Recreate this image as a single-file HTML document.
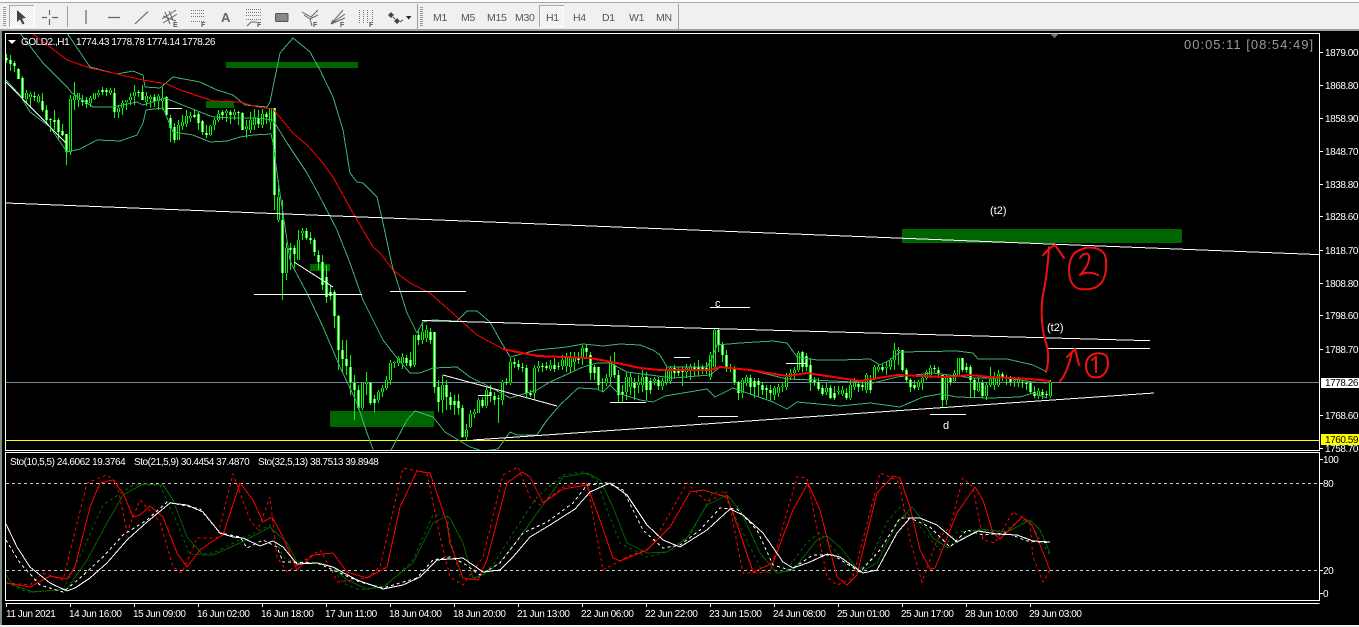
<!DOCTYPE html>
<html><head><meta charset="utf-8"><title>GOLD2.,H1</title>
<style>
html,body{margin:0;padding:0;background:#000;width:1359px;height:627px;overflow:hidden}
svg{display:block}
text{font-family:"Liberation Sans",sans-serif;font-size:10px;letter-spacing:-.45px;fill:#fff}
.tb{fill:#555;letter-spacing:-.3px;font-size:10.5px}
.lb{font-size:11px;letter-spacing:0}
.l{stroke:#fff;stroke-width:1;fill:none;shape-rendering:crispEdges}
.bb{stroke:#3cb371;stroke-width:1;fill:none;shape-rendering:crispEdges}
.hand{stroke:#f01010;stroke-width:2;fill:none;stroke-linecap:round;stroke-linejoin:round}
.i{stroke:#666;fill:none;stroke-width:1.2}
</style></head><body>
<svg width="1359" height="627" viewBox="0 0 1359 627" xmlns="http://www.w3.org/2000/svg">
<defs>
<clipPath id="m"><rect x="6" y="34" width="1313" height="416"/></clipPath>
<clipPath id="s"><rect x="6" y="453" width="1313" height="147"/></clipPath>
<pattern id="hat" width="2" height="2" patternUnits="userSpaceOnUse"><rect width="2" height="2" fill="#fff"/><rect width="1" height="1" fill="#e8e8e8"/><rect x="1" y="1" width="1" height="1" fill="#e8e8e8"/></pattern>
<path id="D" d="M6 58V60M10 60V64M14 63V66M18 69V79M22 78V98M34 96V97M42 101V110M46 110V120M50 119V120M54 120V122M58 120V132M62 131V135M66 134V152M82 100V102M86 100V104M102 90V92M106 90V92M114 93V112M138 92V93M142 92V100M154 97V101M166 97V115M170 118V128M174 127V140M194 115V117M198 114V123M202 121V132M206 133V135M222 112V115M230 112V115M238 112V113M242 113V130M258 118V124M266 114V117M274 108V195M282 220V273M290 248V250M294 248V254M306 231V238M310 238V240M314 240V252M318 255V262M322 262V285M326 277V297M330 292V296M334 292V316M338 316V350M342 350V359M346 359V366M350 367V382M354 383V390M358 390V408M370 383V403M374 399V403M406 358V363M410 360V366M418 335V340M430 332V340M434 332V387M438 387V402M446 385V397M450 397V405M454 401V405M458 401V408M462 408V437M482 400V406M490 392V396M494 396V400M498 398V399M506 382V383M514 362V364M518 364V367M522 367V368M526 368V393M530 393V395M542 366V367M546 366V368M554 365V369M558 366V367M578 358V360M586 348V352M590 355V373M594 367V373M598 367V385M602 382V383M614 365V375M618 375V395M622 392V395M634 383V388M646 377V390M650 381V390M658 380V386M674 368V373M678 370V373M682 370V372M694 367V370M698 367V370M702 367V370M706 368V370M718 330V345M722 344V355M726 355V367M730 367V368M734 368V382M738 382V393M750 378V387M754 381V387M758 381V385M762 385V390M766 388V390M770 390V393M802 352V367M806 356V367M810 365V382M814 380V382M818 382V389M822 388V394M830 388V398M834 393V398M846 393V398M858 384V387M862 385V387M870 380V390M882 367V370M902 350V370M906 370V380M910 380V387M914 385V388M934 368V369M938 370V373M942 375V400M950 378V382M962 358V370M966 367V370M970 367V380M974 380V390M982 383V396M1002 374V378M1006 378V379M1010 379V382M1022 382V383M1026 383V384M1030 383V392M1034 392V396M1042 392V395M1046 394V395"/>
<path id="U" d="M26 93V99M30 94V97M38 96V102M70 99V152M74 96V100M78 93V100M90 98V103M94 93V99M98 93V95M110 90V93M118 108V112M122 103V108M126 100V102M130 97V100M134 92V96M146 96V102M150 97V99M158 96V101M162 98V101M178 125V140M182 122V126M186 116V124M190 116V118M210 126V135M214 120V125M218 114V120M226 111V113M234 112V115M246 126V129M250 120V130M254 117V125M262 114V125M270 108V122M278 197V220M286 248V273M298 240V260M302 231V233M362 383V408M366 382V384M378 392V400M382 388V392M386 380V388M390 363V380M394 362V363M398 358V363M402 357V363M414 335V365M422 332V340M426 330V338M442 385V400M466 430V437M470 414V427M474 412V414M478 400V413M486 390V406M502 382V400M510 362V383M534 368V393M538 366V368M550 365V369M562 360V366M566 358V366M570 358V367M574 357V362M582 348V358M606 378V383M610 362V377M626 377V392M630 377V387M638 382V385M642 377V385M654 379V381M662 381V386M666 369V382M670 368V381M686 368V372M690 367V370M710 355V377M714 330V367M742 380V393M746 377V383M774 388V395M778 387V393M782 386V387M786 377V387M790 373V377M794 370V373M798 353V370M826 388V392M838 391V392M842 390V394M850 385V398M854 383V387M866 375V390M874 367V378M878 367V370M886 367V368M890 360V367M894 350V360M898 350V351M918 382V387M922 378V383M926 372V378M930 368V375M946 378V400M954 373V381M958 358V375M978 383V391M986 385V396M990 379V385M994 378V385M998 374V385M1014 380V381M1018 379V382M1038 391V396M1050 382V396"/>
</defs>
<rect width="1359" height="627" fill="#000"/>
<!-- window chrome -->
<rect x="0" y="0" width="1359" height="29" fill="#f0f0f0"/>
<rect x="0" y="0" width="1359" height="2" fill="#fafafa"/>
<rect x="0" y="2" width="1359" height="1" fill="#a8a8a8"/>
<rect x="0" y="29" width="1359" height="2" fill="#a0a0a0"/>
<rect x="0" y="31" width="2" height="596" fill="#7f917f"/>
<rect x="0" y="625" width="1359" height="2" fill="#f0f0f0"/>
<!-- toolbar -->
<path d="M4.500 7V27M421.500 7V27" stroke="#999" stroke-width="3" stroke-dasharray="1 1"/>
<rect x="9.500" y="5.500" width="25" height="21" fill="url(#hat)" stroke="#fff"/>
<path d="M9.500 27V5.500H34" stroke="#aaa" fill="none"/>
<path d="M17 10L17 22L20 19.500L22.500 24.500L24.500 23.500L22 18.500L26 18Z" fill="#444"/>
<path d="M49.500 10V15M49.500 19V25M42 17.500H47M52 17.500H58" class="i"/>
<path d="M67.500 6V27M417.500 4V29M678.500 4V29" stroke="#a0a0a0" fill="none"/>
<path d="M86 10V24M108 17.500H120M135 24L148 11.500" class="i" stroke-width="1.400"/>
<path d="M162 19L176 10M163 23L177 14M165 12L170 24M169 11L173 20M163 16L176 21" stroke="#666" fill="none"/>
<text x="173" y="27" class="tb" style="font-size:7px;font-weight:bold">E</text>
<path d="M191 10.500H204M191 13.500H204M191 16.500H204M191 21.500H204" stroke="#777" stroke-dasharray="1 1"/>
<text x="201" y="27" class="tb" style="font-size:7px;font-weight:bold">F</text>
<text x="221" y="22" class="tb" style="font-size:13px;font-weight:bold;fill:#666">A</text>
<path d="M246 9.500H261M246 12.500H261M246 15.500H261M246 19.500H261" stroke="#777" stroke-dasharray="1 1"/>
<path d="M247 26L251 22H257" stroke="#666" fill="none"/>
<text x="257" y="27" class="tb" style="font-size:7px;font-weight:bold">F</text>
<rect x="275.500" y="13.500" width="12.500" height="8" rx="1" fill="#888" stroke="#555"/>
<path d="M302 12L311 17L318 10M304 15L310 19L312 26M310 19L318 15" stroke="#666" fill="none"/>
<text x="313" y="27" class="tb" style="font-size:7px;font-weight:bold">F</text>
<path d="M331 24L343 10M331 24L345 14M331 24L345 18M333 20L331 24" stroke="#666" fill="none"/>
<text x="340" y="27" class="tb" style="font-size:7px;font-weight:bold">F</text>
<path d="M359.500 10V24M363.500 10V24M367.500 10V24M372.500 10V21" stroke="#777" stroke-dasharray="1 1"/>
<text x="369" y="27" class="tb" style="font-size:7px;font-weight:bold">F</text>
<path d="M388 15L391 12L394 15L391 18ZM394 21L397 18L400 21L397 24Z" fill="#444"/>
<path d="M393 17L395 19" stroke="#444" fill="none"/><path d="M400 22L403 20" stroke="#444"/>
<path d="M406 16H411.500L408.700 19.500Z" fill="#222"/>
<rect x="539.500" y="5.500" width="24" height="21" fill="url(#hat)" stroke="#fff"/>
<path d="M539.500 27V5.500H564" stroke="#aaa" fill="none"/>
<text x="433" y="21" class="tb">M1</text><text x="461" y="21" class="tb">M5</text><text x="487" y="21" class="tb">M15</text><text x="515" y="21" class="tb">M30</text><text x="546" y="21" class="tb">H1</text><text x="573" y="21" class="tb">H4</text><text x="602" y="21" class="tb">D1</text><text x="629" y="21" class="tb">W1</text><text x="656" y="21" class="tb">MN</text>
<!-- frames -->
<g class="l">
<path d="M5.500 33.500H1319.500V450.500H5.500ZM5.500 452.500H1319.500V600.500H5.500ZM5.500 603.500H1319.500"/>
<path d="M1320 52.500h3M1320 85.500h3M1320 118.500h3M1320 151.500h3M1320 184.500h3M1320 216.500h3M1320 250.500h3M1320 283.500h3M1320 315.500h3M1320 349.500h3M1320 415.500h3M1320 448.500h3M1320 459.500h3M1320 483.500h3M1320 570.500h3M1320 593.500h3"/>
<path d="M6.500 604v3M70.500 604v3M134.500 604v3M198.500 604v3M262.500 604v3M326.500 604v3M390.500 604v3M454.500 604v3M518.500 604v3M582.500 604v3M646.500 604v3M710.500 604v3M774.500 604v3M838.500 604v3M902.500 604v3M966.500 604v3M1030.500 604v3"/>
</g>
<g clip-path="url(#m)">
<!-- zones -->
<g fill="#006400"><rect x="226" y="62" width="132" height="6"/><rect x="206" y="101" width="28" height="7"/><rect x="310" y="264" width="20" height="7"/><rect x="330" y="411" width="104" height="16"/><rect x="902" y="229" width="280" height="14"/></g>
<!-- level lines -->
<path d="M6 382.500H1319" stroke="#778899" shape-rendering="crispEdges"/>
<path d="M6 440.500H1319" stroke="#ff0" shape-rendering="crispEdges"/>
<!-- candles -->
<g transform="translate(.5,0)" shape-rendering="crispEdges">
<path stroke="#0f0" stroke-width="1" fill="none" d="M6 54V63M10 55V71M14 61V72M18 68V79M22 76V100M26 90V103M30 92V108M34 92V101M38 94V103M42 93V112M46 105V125M50 118V132M54 110V130M58 118V140M62 124V136M66 134V165M70 95V155M74 82V110M78 93V107M82 95V106M86 97V108M90 96V107M94 93V100M98 90V97M102 87V95M106 88V96M110 88V95M114 88V118M118 105V118M122 100V115M126 100V110M130 93V105M134 85V105M138 90V97M142 85V100M146 92V106M150 95V108M154 94V107M158 94V110M162 87V110M166 96V115M170 115V142M174 123V143M178 120V140M182 115V130M186 110V127M190 112V122M194 110V118M198 112V130M202 120V135M206 125V138M210 125V136M214 118V130M218 110V122M222 110V120M226 109V122M230 110V124M234 109V120M238 111V125M242 112V130M246 120V138M250 112V133M254 109V130M258 110V128M262 109V128M266 112V124M270 108V130M274 108V210M278 180V222M282 200V300M286 243V280M290 243V270M294 245V268M298 230V260M302 228V240M306 228V240M310 232V244M314 238V256M318 250V270M322 255V290M326 265V303M330 285V300M334 290V328M338 315V370M342 340V372M346 340V375M350 355V395M354 375V420M358 385V410M362 383V410M366 372V395M370 382V405M374 395V412M378 390V403M382 385V397M386 376V390M390 360V385M394 361V368M398 356V366M402 353V369M406 355V366M410 352V368M414 335V367M418 330V345M422 322V344M426 325V342M430 328V344M434 332V393M438 380V412M442 375V413M446 380V410M450 392V410M454 395V415M458 394V415M462 405V438M466 424V440M470 410V428M474 409V418M478 398V413M482 397V408M486 388V408M490 385V402M494 392V405M498 395V423M502 380V405M506 378V385M510 358V385M514 358V368M518 360V370M522 363V372M526 365V397M530 390V397M534 365V400M538 361V372M542 363V372M546 362V370M550 360V371M554 358V372M558 362V370M562 355V370M566 353V372M570 352V372M574 352V370M578 352V364M582 345V365M586 345V358M590 352V380M594 365V380M598 367V390M602 378V392M606 374V386M610 356V385M614 352V378M618 370V402M622 385V402M626 372V400M630 372V395M634 378V400M638 375V393M642 370V392M646 372V400M650 378V394M654 377V385M658 377V390M662 378V390M666 367V385M670 366V384M674 365V378M678 367V376M682 367V386M686 364V378M690 364V380M694 363V376M698 360V376M702 365V374M706 362V374M710 352V380M714 329V370M718 329V352M722 342V362M726 350V372M730 364V372M734 366V385M738 381V400M742 378V398M746 375V386M750 375V395M754 378V398M758 378V397M762 382V395M766 385V399M770 385V401M774 386V400M778 384V397M782 383V392M786 373V390M790 369V380M794 367V380M798 351V372M802 351V372M806 353V371M810 358V391M814 377V386M818 378V391M822 385V396M826 383V395M830 385V399M834 386V400M838 386V395M842 386V396M846 388V400M850 380V400M854 378V390M858 381V392M862 381V391M866 373V393M870 375V393M874 365V380M878 364V372M882 364V372M886 362V375M890 358V370M894 343V370M898 347V365M902 350V372M906 368V382M910 378V392M914 380V390M918 380V390M922 377V390M926 370V380M930 365V378M934 365V372M938 367V378M942 375V408M946 375V405M950 375V385M954 370V382M958 358V377M962 358V372M966 363V373M970 365V397M974 378V397M978 378V392M982 380V398M986 383V400M990 367V387M994 372V390M998 370V387M1002 372V381M1006 375V385M1010 376V386M1014 377V387M1018 377V387M1022 380V388M1026 381V390M1030 381V394M1034 386V398M1038 388V399M1042 389V399M1046 391V398M1050 380V398"/>
<use href="#D" stroke="#0f0" stroke-width="3"/><use href="#U" stroke="#0f0" stroke-width="3"/>
<use href="#D" stroke="#fff" stroke-width="1"/><use href="#U" stroke="#000" stroke-width="1"/>
</g>
<!-- bollinger -->
<polyline class="bb" points="67,33 90,67 117,74 133,71 143,75 145,87 160,88 173,77 200,82 217,90 233,95 245,105 267,107 270,102 280,53 293,38 310,52 320,70 333,97 343,130 350,173 357,182 363,183 377,197 383,223 392,265 407,313 417,333 423,322 433,320 457,321 467,311 477,311 490,322 500,340 510,357 537,350 567,347 583,344 603,346 620,344 640,345 653,350 660,355 667,367 707,367 712,358 717,345 740,343 773,341 787,343 797,357 817,360 840,360 870,359 880,365 890,360 900,352 957,351 973,353 978,359 1007,359 1033,365 1047,372"/>
<polyline class="bb" points="6,80 20,95 30,112 50,127 67,152 80,149 97,140 120,141 137,135 143,123 146,110 163,108 173,132 193,135 210,142 227,141 240,137 253,135 271,134 273,143 278,180 290,260 293,267 307,293 323,327 340,367 357,403 367,433 374,452 390,452 407,420 415,411 433,417 445,432 470,447 483,451 498,449 510,432 517,435 537,435 547,420 560,405 578,388 597,389 603,392 610,385 618,393 640,400 653,402 665,396 707,389 715,397 733,388 773,402 787,409 797,402 840,406 870,403 900,407 923,397 940,394 957,397 990,398 1020,397 1033,393 1047,398"/>
<polyline class="bb" points="20,33 43,63 67,87 72,93 93,107 113,107 137,102 143,105 165,98 190,108 213,117 233,118 257,118 273,120 287,143 307,173 320,197 337,230 350,263 363,300 383,340 397,358 410,373 420,373 433,368 457,367 470,377 490,387 510,398 537,390 550,382 583,367 597,363 610,363 627,372 650,375 673,378 710,375 720,367 750,370 787,379 813,380 873,383 897,377 933,373 973,378 1007,378 1033,382 1047,383"/>
<!-- MA -->
<polyline fill="none" stroke="#f00" shape-rendering="crispEdges" points="33,34 50,47 67,60 90,68 113,73 143,80 167,84 180,90 213,101 240,102 257,107 273,109 293,133 307,145 323,163 333,177 353,213 373,247 380,253 393,270 410,283 430,293 457,317 477,335 503,349"/>
<polyline fill="none" stroke="#f00" stroke-width="2" shape-rendering="crispEdges" points="503,349 537,356 590,358 617,363 640,368 660,370 710,370 720,367 750,370 787,376 807,373 840,378 860,381 897,375 947,377 970,375 990,377 1030,379 1050,381"/>
<!-- trend lines -->
<g class="l">
<path d="M6 203L1319 254.600"/>
<path d="M6 82L66 143"/>
<path d="M167 108.500H182M254 294.500H362M390 291.500H466M478 395.500H490M610 402.500H646M710 307.500H750M674 357.500H690M786 363.500H806M698 416.500H738M930 414.500H966M1047 348.500H1150"/>
<path d="M294 262L333 287M422 320.500L1150 340.700M443 375L557 406M473 440L1154 393"/>
</g>
<!-- hand drawing -->
<path class="hand" d="M1046 372C1049 362 1049 350 1045 340C1041 325 1041 305 1043 295C1047 275 1048 262 1049 247M1043 255L1050 248L1055 245L1064 258"/>
<path class="hand" d="M1080 250C1072 252 1069 262 1069 270C1069 282 1074 288 1080 289C1090 290 1098 288 1102 282C1107 274 1107 262 1105 255C1101 248 1090 245 1080 250Z"/>
<path class="hand" d="M1080 258C1083 253 1088 252 1089 256C1090 262 1085 270 1080 275C1085 272 1092 272 1098 275"/>
<path class="hand" d="M1060 381C1065 376 1069 365 1072 352M1067 357L1075 349L1079 365"/>
<path class="hand" d="M1087 360C1085 366 1086 372 1090 376C1094 378 1100 378 1103 375C1108 371 1109 363 1107 357C1104 352 1092 351 1087 360Z"/>
<path class="hand" d="M1092 360L1096 357L1096 372" stroke-width="1.500"/>
</g>
<path d="M1050 33.500H1059L1054.500 38Z" fill="#777"/>
<!-- stochastic -->
<path d="M6 483.500H1319M6 570.500H1319" stroke="#ccc" stroke-dasharray="3 3" shape-rendering="crispEdges"/>
<g clip-path="url(#s)" fill="none" shape-rendering="crispEdges">
<polyline stroke="#006400" points="6,575 13,585 33,592 67,589 87,560 107,523 123,495 143,484 163,485 173,500 187,537 203,555 213,555 240,543 270,527 287,543 297,562 320,563 333,567 347,580 367,589 383,587 413,563 433,523 447,516 450,518 463,543 473,578 483,575 500,562 520,537 543,505 563,477 587,473 600,480 613,507 627,543 647,553 667,552 687,538 707,505 727,495 740,510 760,553 777,573 793,570 817,540 827,536 840,547 860,572 877,563 897,523 912,507 920,517 933,538 948,548 963,538 980,529 1007,532 1030,520 1040,530 1050,553"/>
<polyline stroke="#006400" stroke-dasharray="3 3" points="6,582 27,592 63,590 83,550 103,505 133,485 160,485 177,523 190,555 213,553 240,540 270,525 283,557 293,562 330,565 343,583 360,590 387,585 413,560 433,515 447,515 450,537 460,577 473,580 493,565 513,533 537,497 563,475 583,472 597,480 607,510 620,543 647,557 667,552 690,535 713,492 723,492 740,527 760,567 770,573 787,570 807,542 820,533 837,553 853,575 870,560 887,522 900,507 907,513 920,527 940,550 957,532 977,530 1003,532 1020,520 1030,522 1040,540 1050,555"/>
<polyline stroke="#f00" stroke-dasharray="3 3" points="6,583 30,585 43,573 63,580 87,483 107,475 117,483 127,532 140,500 160,522 173,567 182,573 197,538 217,538 233,474 250,520 258,530 270,497 277,557 287,572 320,550 338,582 367,578 380,567 403,468 427,473 440,537 450,577 463,585 483,557 503,475 518,467 530,497 540,505 563,487 587,483 603,570 627,557 650,548 670,513 687,483 707,502 727,492 743,573 770,572 797,477 807,478 827,577 837,585 853,578 880,473 897,480 900,487 910,540 922,582 937,540 950,527 963,478 973,487 983,540 995,543 1013,512 1030,522 1033,557 1043,582 1050,570"/>
<polyline stroke="#f00" points="6,583 30,587 50,576 67,579 75,567 90,507 100,483 113,480 123,493 133,517 140,515 150,506 163,517 177,553 187,567 200,550 213,541 223,535 240,483 253,500 263,522 272,517 283,537 297,570 313,555 333,553 347,572 367,578 387,567 400,507 417,471 430,473 447,523 450,543 463,578 478,580 487,560 507,483 522,472 530,477 543,503 563,489 587,485 600,520 613,558 620,561 647,550 670,527 690,492 703,490 727,497 740,533 753,572 773,563 793,510 808,483 820,510 837,577 847,585 857,575 877,493 893,476 900,478 910,507 920,550 930,569 935,568 957,513 975,487 983,500 993,533 1000,539 1022,517 1032,525 1050,570"/>
<polyline stroke="#fff" stroke-dasharray="3 3" points="6,540 20,563 40,585 63,592 80,578 103,557 123,535 147,520 167,502 200,509 220,533 240,537 247,548 263,540 277,547 283,562 317,563 340,573 360,582 383,588 417,578 433,560 450,557 463,563 480,575 500,563 523,533 547,522 573,503 587,485 607,483 623,490 643,530 663,548 680,545 700,530 720,508 737,509 757,530 773,565 790,570 813,555 833,555 860,572 880,550 900,518 910,518 930,527 943,540 950,547 967,530 983,535 1007,533 1027,541 1050,543"/>
<polyline stroke="#fff" points="6,524 17,547 30,567 50,583 67,591 75,588 90,578 107,563 127,540 147,522 170,503 187,505 203,512 220,533 233,537 243,538 260,546 273,541 283,547 297,564 317,563 333,567 357,580 383,589 403,585 420,577 437,560 463,558 483,572 500,570 513,557 530,537 550,525 575,509 590,492 610,483 627,495 647,525 663,540 680,547 707,530 730,509 743,515 763,533 783,562 793,568 810,562 827,554 840,557 863,573 877,570 897,533 910,518 920,518 937,525 957,542 978,531 997,534 1017,535 1033,541 1050,542"/>
</g>
<!-- bid / level tags -->
<rect x="1321" y="378" width="38" height="10" fill="#fff"/>
<rect x="1321" y="434" width="38" height="11" fill="#ff0"/>
<!-- chart text -->
<path d="M8 40H16L12 44Z" fill="#fff"/>
<text x="21" y="45">GOLD2.,H1</text><text x="76" y="45">1774.43 1778.78 1774.14 1778.26</text>
<text x="1184" y="49" style="font-size:13px;letter-spacing:1px;fill:#9a9a9a">00:05:11 [08:54:49]</text>
<text x="10" y="465">Sto(10,5,5) 24.6062 19.3764</text><text x="134" y="465">Sto(21,5,9) 30.4454 37.4870</text><text x="258" y="465">Sto(32,5,13) 38.7513 39.8948</text>
<text x="715" y="307" class="lb">c</text><text x="943" y="429" class="lb">d</text><text x="990" y="214" class="lb">(t2)</text><text x="1047" y="331" class="lb">(t2)</text>
<g>
<text x="1325" y="56">1879.00</text><text x="1325" y="89">1868.80</text><text x="1325" y="122">1858.90</text><text x="1325" y="155">1848.70</text><text x="1325" y="188">1838.80</text><text x="1325" y="220">1828.60</text><text x="1325" y="254">1818.70</text><text x="1325" y="287">1808.80</text><text x="1325" y="319">1798.60</text><text x="1325" y="353">1788.70</text><text x="1325" y="386" style="fill:#000">1778.26</text><text x="1325" y="419">1768.60</text><text x="1325" y="452">1758.70</text><text x="1325" y="443" style="fill:#000">1760.59</text>
<text x="1323" y="463">100</text><text x="1323" y="487">80</text><text x="1323" y="574">20</text><text x="1323" y="597">0</text>
</g>
<g>
<text x="6" y="617">11 Jun 2021</text><text x="69" y="617">14 Jun 16:00</text><text x="133" y="617">15 Jun 09:00</text><text x="197" y="617">16 Jun 02:00</text><text x="261" y="617">16 Jun 18:00</text><text x="325" y="617">17 Jun 11:00</text><text x="389" y="617">18 Jun 04:00</text><text x="453" y="617">18 Jun 20:00</text><text x="517" y="617">21 Jun 13:00</text><text x="581" y="617">22 Jun 06:00</text><text x="645" y="617">22 Jun 22:00</text><text x="709" y="617">23 Jun 15:00</text><text x="773" y="617">24 Jun 08:00</text><text x="837" y="617">25 Jun 01:00</text><text x="901" y="617">25 Jun 17:00</text><text x="965" y="617">28 Jun 10:00</text><text x="1029" y="617">29 Jun 03:00</text>
</g>
</svg>
</body></html>
